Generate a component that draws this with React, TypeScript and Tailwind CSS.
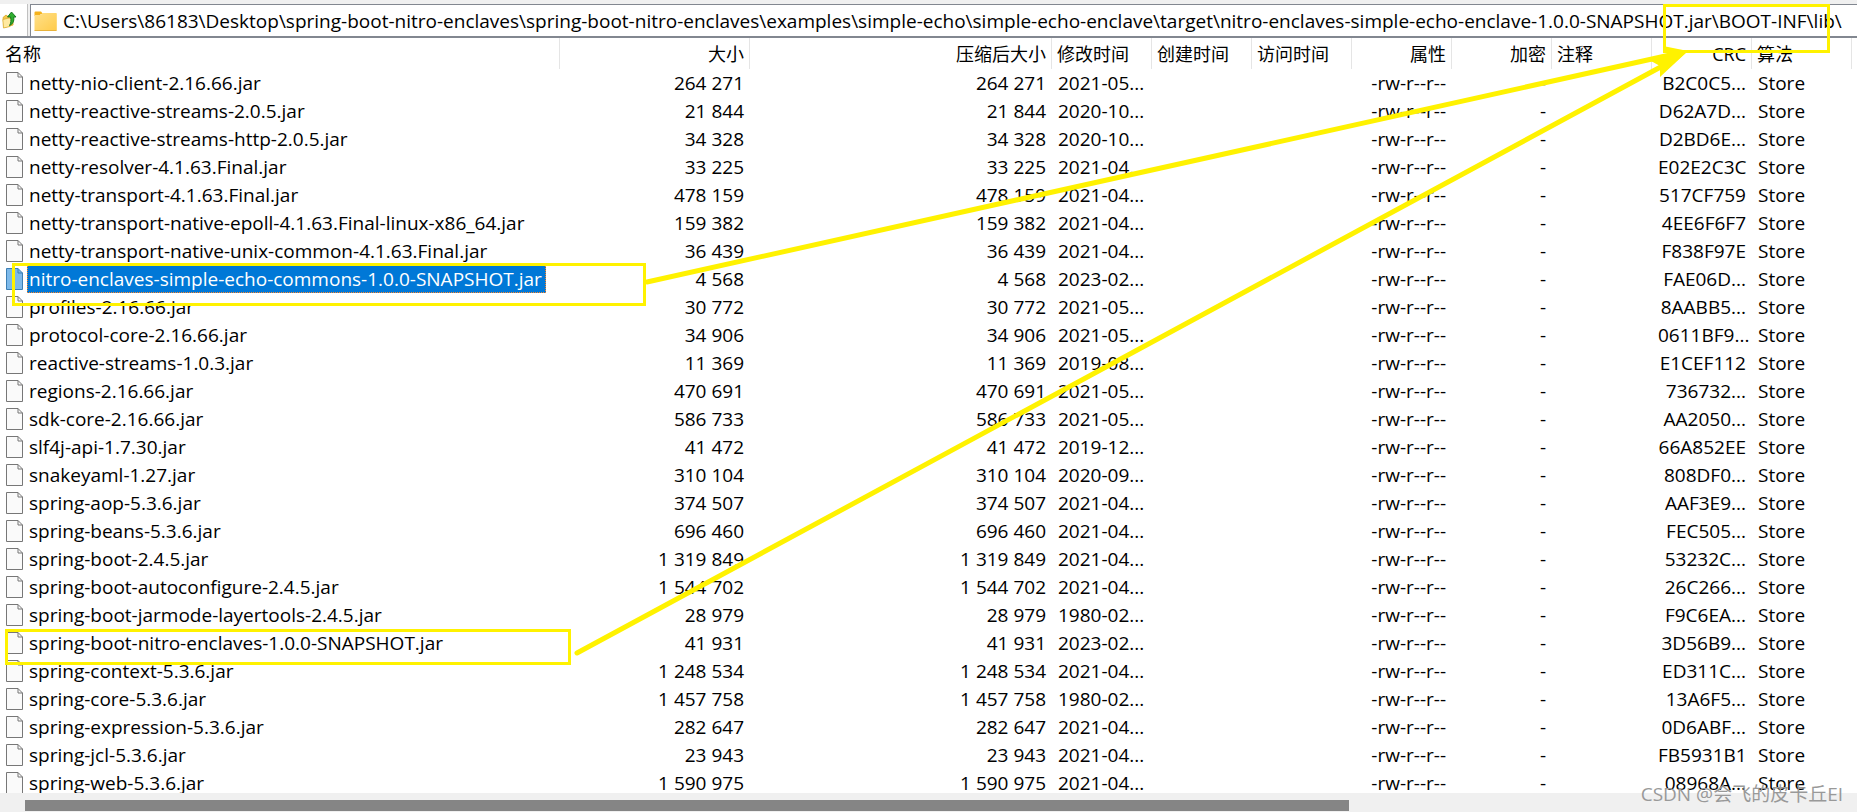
import type { ReactNode } from "react";

type Entry = { name: string; size: string; modified: string; crc: string };

const raw: [string, string, string, string][] = [
  ["netty-nio-client-2.16.66.jar", "264 271", "2021-05...", "B2C0C5..."],
  ["netty-reactive-streams-2.0.5.jar", "21 844", "2020-10...", "D62A7D..."],
  ["netty-reactive-streams-http-2.0.5.jar", "34 328", "2020-10...", "D2BD6E..."],
  ["netty-resolver-4.1.63.Final.jar", "33 225", "2021-04...", "E02E2C3C"],
  ["netty-transport-4.1.63.Final.jar", "478 159", "2021-04...", "517CF759"],
  ["netty-transport-native-epoll-4.1.63.Final-linux-x86_64.jar", "159 382", "2021-04...", "4EE6F6F7"],
  ["netty-transport-native-unix-common-4.1.63.Final.jar", "36 439", "2021-04...", "F838F97E"],
  ["nitro-enclaves-simple-echo-commons-1.0.0-SNAPSHOT.jar", "4 568", "2023-02...", "FAE06D..."],
  ["profiles-2.16.66.jar", "30 772", "2021-05...", "8AABB5..."],
  ["protocol-core-2.16.66.jar", "34 906", "2021-05...", "0611BF9..."],
  ["reactive-streams-1.0.3.jar", "11 369", "2019-08...", "E1CEF112"],
  ["regions-2.16.66.jar", "470 691", "2021-05...", "736732..."],
  ["sdk-core-2.16.66.jar", "586 733", "2021-05...", "AA2050..."],
  ["slf4j-api-1.7.30.jar", "41 472", "2019-12...", "66A852EE"],
  ["snakeyaml-1.27.jar", "310 104", "2020-09...", "808DF0..."],
  ["spring-aop-5.3.6.jar", "374 507", "2021-04...", "AAF3E9..."],
  ["spring-beans-5.3.6.jar", "696 460", "2021-04...", "FEC505..."],
  ["spring-boot-2.4.5.jar", "1 319 849", "2021-04...", "53232C..."],
  ["spring-boot-autoconfigure-2.4.5.jar", "1 544 702", "2021-04...", "26C266..."],
  ["spring-boot-jarmode-layertools-2.4.5.jar", "28 979", "1980-02...", "F9C6EA..."],
  ["spring-boot-nitro-enclaves-1.0.0-SNAPSHOT.jar", "41 931", "2023-02...", "3D56B9..."],
  ["spring-context-5.3.6.jar", "1 248 534", "2021-04...", "ED311C..."],
  ["spring-core-5.3.6.jar", "1 457 758", "1980-02...", "13A6F5..."],
  ["spring-expression-5.3.6.jar", "282 647", "2021-04...", "0D6ABF..."],
  ["spring-jcl-5.3.6.jar", "23 943", "2021-04...", "FB5931B1"],
  ["spring-web-5.3.6.jar", "1 590 975", "2021-04...", "08968A..."],
];

const entries: Entry[] = raw.map(([name, size, modified, crc]) => ({ name, size, modified, crc }));
const selectedName = "nitro-enclaves-simple-echo-commons-1.0.0-SNAPSHOT.jar";

const columns = [
  { label: "名称", width: "w-[560px]", right: false },
  { label: "大小", width: "w-[190px]", right: true },
  { label: "压缩后大小", width: "w-[302px]", right: true },
  { label: "修改时间", width: "w-[100px]", right: false },
  { label: "创建时间", width: "w-[100px]", right: false },
  { label: "访问时间", width: "w-[100px]", right: false },
  { label: "属性", width: "w-[100px]", right: true },
  { label: "加密", width: "w-[100px]", right: true },
  { label: "注释", width: "w-[100px]", right: false },
  { label: "CRC", width: "w-[100px]", right: true },
  { label: "算法", width: "w-[100px]", right: false },
];

function UpIcon() {
  return (
    <svg width="16" height="18" viewBox="0 0 16 18" aria-hidden="true">
      <path d="M1 6.5 4 4l2 1.5 5-1v9.5l-9 2.5z" fill="#f4c84a" stroke="#d9a520" strokeWidth=".8" />
      <path d="M.8 8.500 7 7l3.500 1L8 15.500 1.500 17z" fill="#ffe9a0" stroke="#dcae35" strokeWidth=".8" />
      <path d="M9.500 1 14 6h-2.200c.4 4.200-.8 7-4.300 8.500C9 12 9.200 9.500 8.600 6H5.500z" fill="#2fae2f" stroke="#0f6f1a" strokeWidth=".9" />
    </svg>
  );
}

function FolderIcon() {
  return (
    <svg width="23" height="20" viewBox="0 0 23 20" aria-hidden="true">
      <defs>
        <linearGradient id="folder" x1="0" y1="0" x2="1" y2="1">
          <stop offset="0" stopColor="#ffe08a" />
          <stop offset="1" stopColor="#ffcb4a" />
        </linearGradient>
      </defs>
      <path d="M.5 1.500Q.5.500 1.500.5H7l2 2.500h-2l-2 2H.5z" fill="#f5b21c" />
      <path d="M.5 4h6l2-2H22q.8 0 .8.800V19q0 .8-.8.800H1.300Q.5 19.800.5 19z" fill="url(#folder)" />
      <path d="M.5 19.500h22" stroke="#e8b33c" />
    </svg>
  );
}

function FileIcon({ selected }: { selected: boolean }) {
  const fill = selected ? "#7db9ea" : "#fafafa";
  const line = selected ? "#3c7fb4" : "#777777";
  return (
    <svg className="shrink-0" width="17" height="22" viewBox="0 0 17 22" aria-hidden="true">
      <path d="M.5.500h11.500l4.500 4.500v16.500H.5z" fill={fill} stroke={line} />
      <path d="M12 .5v4.500h4.500" fill="none" stroke={line} />
    </svg>
  );
}

function Cell({ right, children }: { right?: boolean; children?: ReactNode }) {
  return (
    <td className={right ? "h-7 px-1.5 text-right" : "h-7 px-1.5 text-left"}>{children}</td>
  );
}

function Annotations() {
  return (
    <svg
      className="pointer-events-none absolute left-0 top-0"
      width="1857"
      height="812"
      viewBox="0 0 1857 812"
      fill="none"
      stroke="#fff200"
      aria-hidden="true"
    >
      <g strokeWidth="3">
        <rect x="1664.500" y="5.500" width="164" height="46" />
        <rect x="13.500" y="264.500" width="631" height="40" />
        <rect x="6.500" y="630.500" width="563" height="33" />
      </g>
      <g strokeWidth="5" strokeLinecap="round">
        <path d="M647 282 1670 55" />
        <path d="M577 653 1668 63" />
      </g>
      <g fill="#fff200" stroke="none">
        <path d="M1688 51 1663 46 1668 55 1667 69z" />
        <path d="M1688 51 1651 61 1660 66 1660 77z" />
      </g>
    </svg>
  );
}

export default function App() {
  return (
    <main className="relative flex h-screen flex-col overflow-hidden bg-white font-['Open_Sans','Noto_Sans_CJK_SC',sans-serif] text-[19px] leading-7 text-black">
      <header className="flex h-[38px] shrink-0 border-b-2 border-[#828790] bg-[#f0f0f0] pt-1">
        <button type="button" aria-label="上一级" className="flex w-7 items-center border-r border-[#c0c0c0] bg-white pl-0.5">
          <UpIcon />
        </button>
        <div className="ml-0.5 flex min-w-0 flex-1 items-center gap-1.5 border-l border-t border-[#828790] bg-white pl-[3px]">
          <FolderIcon />
          <input
            aria-label="路径"
            className="h-7 min-w-0 flex-1 bg-transparent outline-none"
            defaultValue="C:\Users\86183\Desktop\spring-boot-nitro-enclaves\spring-boot-nitro-enclaves\examples\simple-echo\simple-echo-enclave\target\nitro-enclaves-simple-echo-enclave-1.0.0-SNAPSHOT.jar\BOOT-INF\lib\"
          />
        </div>
      </header>

      <div className="min-h-0 flex-1 overflow-hidden">
        <table className="w-full table-fixed border-separate border-spacing-0 whitespace-nowrap">
          <colgroup>
            {columns.map((c) => (
              <col key={c.label} className={c.width} />
            ))}
            <col />
          </colgroup>
          <thead>
            <tr>
              {columns.map((c) => (
                <th
                  key={c.label}
                  scope="col"
                  className={
                    c.right
                      ? "h-[31px] border-r border-[#e5e5e5] px-[5px] text-right text-lg leading-7 font-normal"
                      : "h-[31px] border-r border-[#e5e5e5] px-[5px] text-left text-lg leading-7 font-normal"
                  }
                >
                  {c.label}
                </th>
              ))}
              <td />
            </tr>
          </thead>
          <tbody>
            {entries.map((e) => {
              const selected = e.name === selectedName;
              return (
                <tr key={e.name}>
                  <td className="h-7 pl-1.5">
                    <div className="flex h-7 items-center gap-1">
                      <FileIcon selected={selected} />
                      <span
                        className={
                          selected
                            ? "h-7 bg-[#0078d7] px-0.5 pr-1 text-white outline-1 -outline-offset-1 outline-dotted outline-[#ff8728]"
                            : "h-7 px-0.5"
                        }
                      >
                        {e.name}
                      </span>
                    </div>
                  </td>
                  <Cell right>{e.size}</Cell>
                  <Cell right>{e.size}</Cell>
                  <Cell>{e.modified}</Cell>
                  <Cell />
                  <Cell />
                  <Cell right>-rw-r--r--</Cell>
                  <Cell right>-</Cell>
                  <Cell />
                  <Cell right>{e.crc}</Cell>
                  <Cell>Store</Cell>
                  <td />
                </tr>
              );
            })}
          </tbody>
        </table>
      </div>

      <footer className="flex h-[19px] shrink-0 items-center bg-[#f0f0f0] pt-1.5 pl-[25px]">
        <div className="h-[11px] w-[1324px] bg-[#858585]" />
      </footer>

      <Annotations />
      <p className="absolute right-3.5 bottom-1 text-[19px] leading-7 text-[#999999]">CSDN @会飞的皮卡丘EI</p>
    </main>
  );
}
